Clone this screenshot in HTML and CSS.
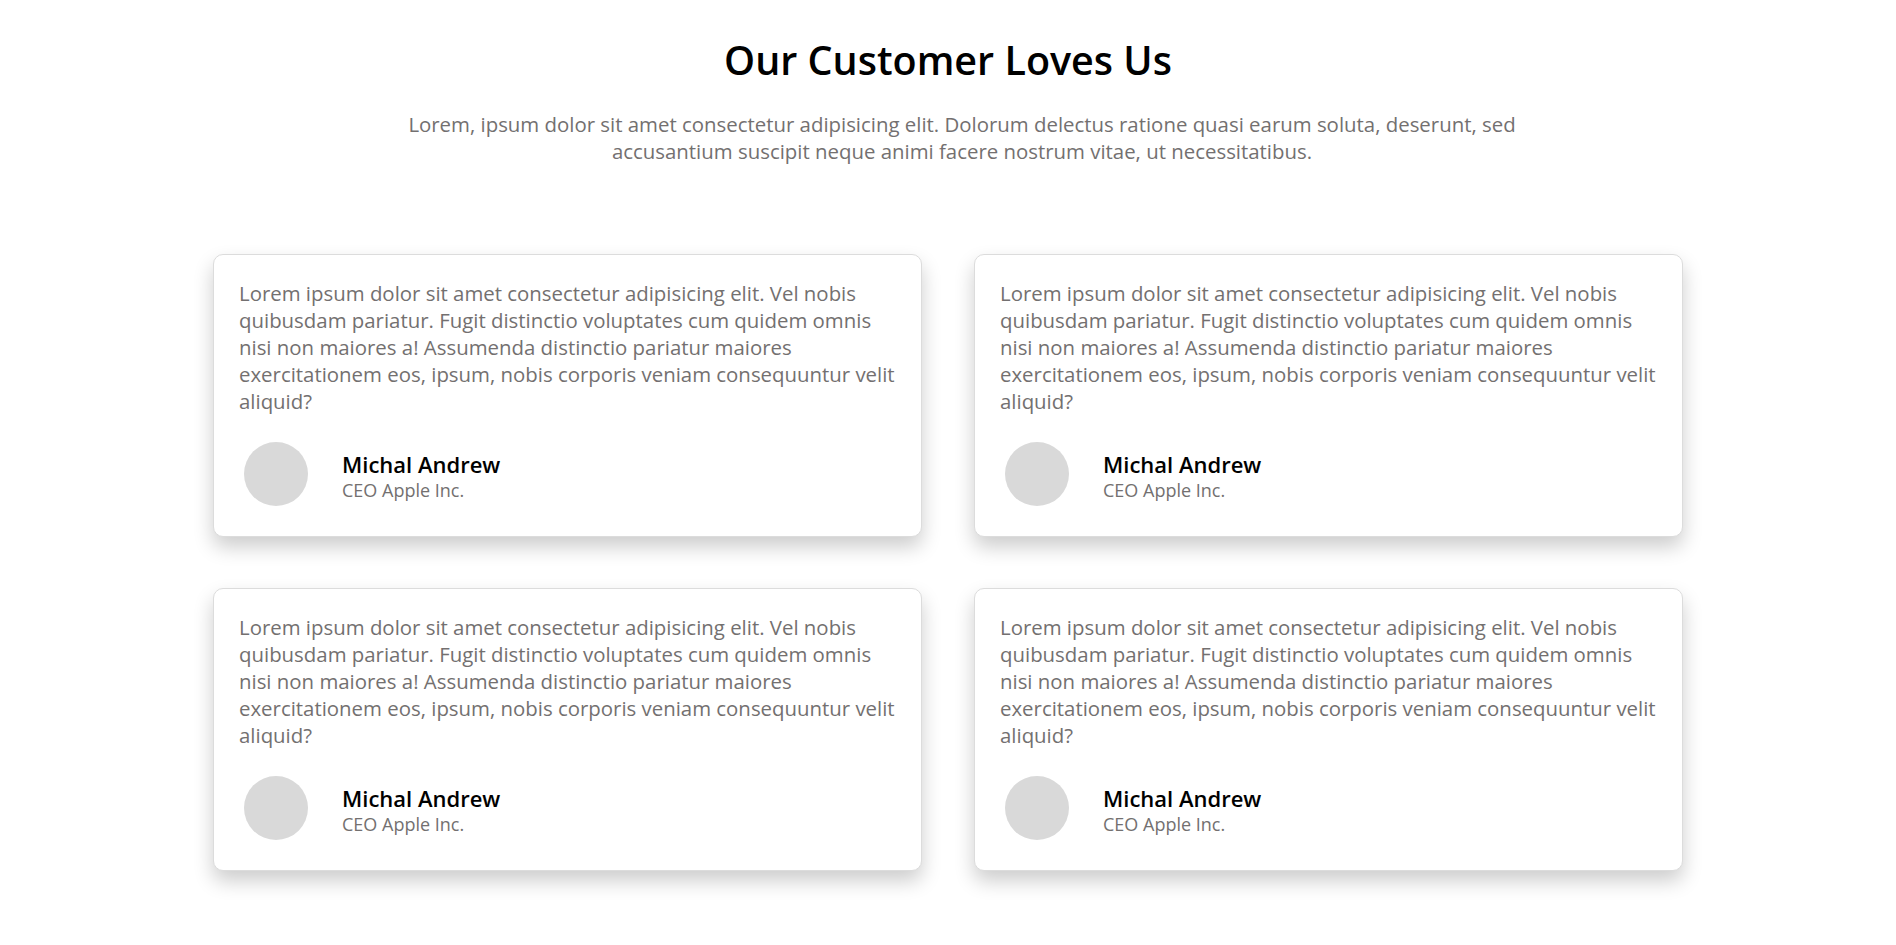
FILE: index.html
```html
<!DOCTYPE html>
<html lang="en">
<head>
<meta charset="utf-8">
<title>Our Customer Loves Us</title>
<link rel="stylesheet" href="styles.css">
</head>
<body>
<section class="testimonials">
  <header class="intro">
    <h1 class="title">Our Customer Loves Us</h1>
    <p class="lead">Lorem, ipsum dolor sit amet consectetur adipisicing elit. Dolorum delectus ratione quasi earum soluta, deserunt, sed accusantium suscipit neque animi facere nostrum vitae, ut necessitatibus.</p>
  </header>
  <div class="grid">
    <article class="card">
      <p class="quote">Lorem ipsum dolor sit amet consectetur adipisicing elit. Vel nobis quibusdam pariatur. Fugit distinctio voluptates cum quidem omnis nisi non maiores a! Assumenda distinctio pariatur maiores exercitationem eos, ipsum, nobis corporis veniam consequuntur velit aliquid?</p>
      <div class="author">
        <div class="avatar"></div>
        <div class="info">
          <h3 class="name">Michal Andrew</h3>
          <p class="role">CEO Apple Inc.</p>
        </div>
      </div>
    </article>
    <article class="card">
      <p class="quote">Lorem ipsum dolor sit amet consectetur adipisicing elit. Vel nobis quibusdam pariatur. Fugit distinctio voluptates cum quidem omnis nisi non maiores a! Assumenda distinctio pariatur maiores exercitationem eos, ipsum, nobis corporis veniam consequuntur velit aliquid?</p>
      <div class="author">
        <div class="avatar"></div>
        <div class="info">
          <h3 class="name">Michal Andrew</h3>
          <p class="role">CEO Apple Inc.</p>
        </div>
      </div>
    </article>
    <article class="card">
      <p class="quote">Lorem ipsum dolor sit amet consectetur adipisicing elit. Vel nobis quibusdam pariatur. Fugit distinctio voluptates cum quidem omnis nisi non maiores a! Assumenda distinctio pariatur maiores exercitationem eos, ipsum, nobis corporis veniam consequuntur velit aliquid?</p>
      <div class="author">
        <div class="avatar"></div>
        <div class="info">
          <h3 class="name">Michal Andrew</h3>
          <p class="role">CEO Apple Inc.</p>
        </div>
      </div>
    </article>
    <article class="card">
      <p class="quote">Lorem ipsum dolor sit amet consectetur adipisicing elit. Vel nobis quibusdam pariatur. Fugit distinctio voluptates cum quidem omnis nisi non maiores a! Assumenda distinctio pariatur maiores exercitationem eos, ipsum, nobis corporis veniam consequuntur velit aliquid?</p>
      <div class="author">
        <div class="avatar"></div>
        <div class="info">
          <h3 class="name">Michal Andrew</h3>
          <p class="role">CEO Apple Inc.</p>
        </div>
      </div>
    </article>
  </div>
</section>
</body>
</html>
```

FILE: styles.css
```css
* {
  box-sizing: border-box;
}

body {
  margin: 0;
  background: #ffffff;
  font-family: "Open Sans", "Noto Sans", sans-serif;
  color: #000;
}

.testimonials {
  padding: 36px 0 60px;
}

.intro {
  text-align: center;
}

.title {
  margin: 0;
  font-size: 39.5px;
  font-weight: 600;
  line-height: 48px;
  color: #000;
}

.lead {
  margin: 27px auto 0;
  max-width: 1168px;
  padding-left: 28px;
  font-size: 20.4px;
  line-height: 27px;
  color: #737070;
}

.grid {
  width: 1470px;
  margin: 89px auto 0;
  display: grid;
  grid-template-columns: 1fr 1fr;
  gap: 51px 52px;
}

.card {
  background: #fff;
  border: 1px solid #dcdcdc;
  border-radius: 10px;
  padding: 25px;
  box-shadow: 0 10px 20px rgba(0, 0, 0, 0.2);
}

.quote {
  margin: 0;
  font-size: 20.4px;
  line-height: 27px;
  color: #737070;
}

.author {
  margin-top: 22px;
  display: flex;
  align-items: center;
  gap: 29px;
}

.avatar {
  width: 64px;
  height: 64px;
  margin: 5px;
  border-radius: 50%;
  background: #d9d9d9;
  flex: none;
}

.info {
  padding-top: 6px;
}

.name {
  margin: 0;
  font-size: 22px;
  font-weight: 600;
  line-height: 1.2;
  color: #000;
}

.role {
  margin: 1px 0 0;
  font-size: 18px;
  line-height: 1.4;
  color: #737070;
}
```
